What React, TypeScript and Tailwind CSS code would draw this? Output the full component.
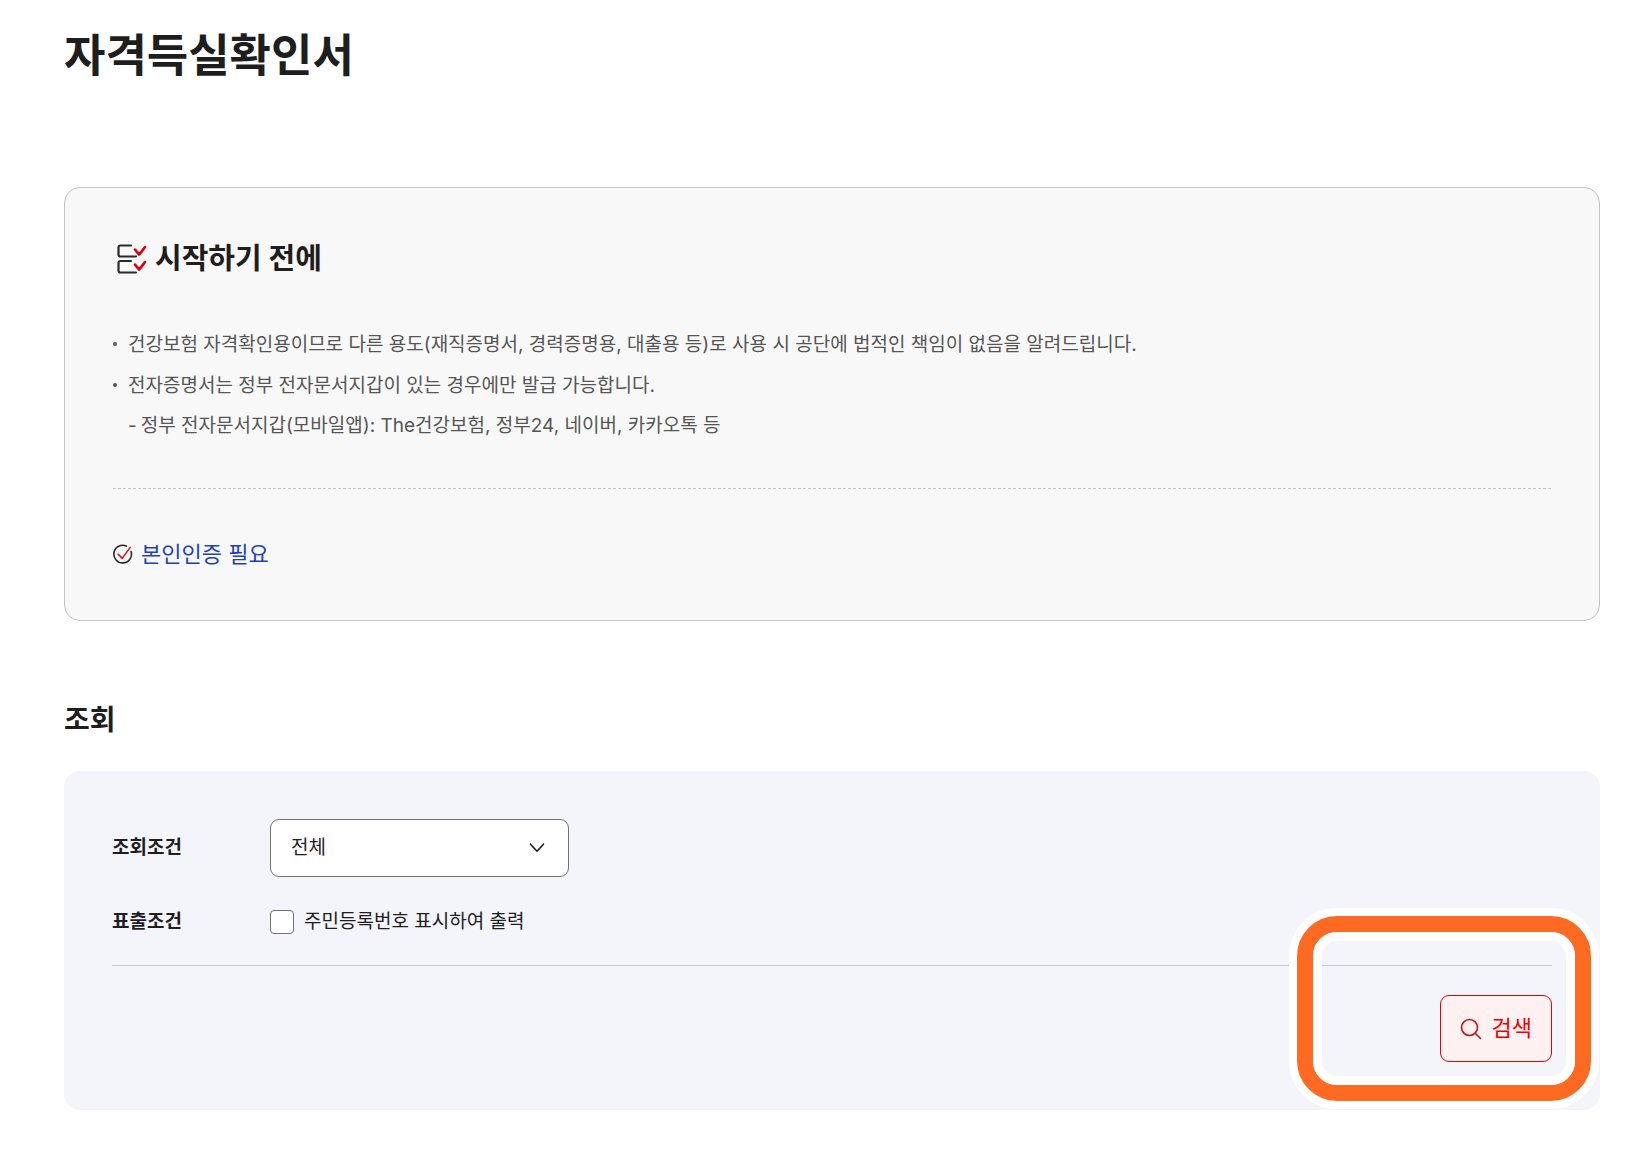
import { useState } from "react";

const NOTICES = [
  {
    text: "건강보험 자격확인용이므로 다른 용도(재직증명서, 경력증명용, 대출용 등)로 사용 시 공단에 법적인 책임이 없음을 알려드립니다.",
  },
  {
    text: "전자증명서는 정부 전자문서지갑이 있는 경우에만 발급 가능합니다.",
    sub: "정부 전자문서지갑(모바일앱): The건강보험, 정부24, 네이버, 카카오톡 등",
  },
];

export default function App() {
  const [condition, setCondition] = useState("all");
  const [showNumber, setShowNumber] = useState(false);

  return (
    <main className="bg-white pt-[26px] pr-[42px] pb-11 pl-16 font-['Inter','Noto_Sans_CJK_KR',sans-serif] text-[#1e1e1e]">
      <h1 className="text-[45px] leading-[60px] font-bold">자격득실확인서</h1>

      {/* 안내 카드 */}
      <section className="mt-[101px] rounded-2xl border border-[#c4c4c4] bg-[#f8f8f8] px-12 pt-12 pb-[50px]">
        <h2 className="flex items-center gap-1 text-[29px] leading-[46px] font-bold">
          <ChecklistIcon />
          시작하기 전에
        </h2>

        <ul className="mt-[42px] text-[19px] leading-[41px] text-[#555]">
          {NOTICES.map((n) => (
            <li key={n.text} className="flex gap-[11px]">
              <span className="mt-[18px] h-1 w-1 shrink-0 rounded-full bg-[#555]" />
              <div>
                <p>{n.text}</p>
                {n.sub && (
                  <p className="flex gap-1 leading-10">
                    <span>-</span>
                    {n.sub}
                  </p>
                )}
              </div>
            </li>
          ))}
        </ul>

        <div className="mt-[42px] border-t border-dashed border-[#c4c4c4]" />

        <p className="mt-[49px] flex items-center gap-2 text-[22px] leading-8 text-[#1d42b8]">
          <CheckCircleIcon />
          본인인증 필요
        </p>
      </section>

      <h2 className="mt-[81px] text-[28px] leading-9 font-bold">조회</h2>

      {/* 조회 조건 */}
      <form
        className="relative mt-[33px] rounded-2xl bg-[#f3f5fa] p-12"
        onSubmit={(e) => e.preventDefault()}
      >
        <div className="flex items-center">
          <label htmlFor="condition" className="w-[158px] text-[19px] font-bold">
            조회조건
          </label>
          <div className="grid w-[299px] items-center">
            <select
              id="condition"
              value={condition}
              onChange={(e) => setCondition(e.target.value)}
              className="col-start-1 row-start-1 h-[58px] appearance-none rounded-[9px] border border-[#717171] bg-white px-5 text-[19px]"
            >
              <option value="all">전체</option>
              <option value="work">직장가입자</option>
              <option value="local">지역가입자</option>
            </select>
            <svg
              className="pointer-events-none col-start-1 row-start-1 mr-6 justify-self-end"
              width="16"
              height="10"
              viewBox="0 0 16 10"
              fill="none"
            >
              <path d="M1.5 1.2L8 8.2l6.5-7" stroke="#1e1e1e" strokeWidth="1.6" strokeLinecap="round" strokeLinejoin="round" />
            </svg>
          </div>
        </div>

        <div className="mt-[29px] flex items-center border-b border-[#c4c6cb] pb-[27px]">
          <span className="w-[158px] text-[19px] leading-8 font-bold">표출조건</span>
          <label className="flex items-center gap-[10px] text-[19px] leading-8">
            <input
              type="checkbox"
              checked={showNumber}
              onChange={(e) => setShowNumber(e.target.checked)}
              className="h-6 w-6 appearance-none rounded border border-[#717171] bg-white checked:bg-[#d7000f]"
            />
            주민등록번호 표시하여 출력
          </label>
        </div>

        <div className="mt-[29px] flex justify-end">
          <button
            type="submit"
            className="flex h-[67px] items-center gap-[10px] rounded-[9px] border border-[#e60000] bg-[#fdf1f1] px-[19px] text-[22px] text-[#f00000]"
          >
            <SearchIcon />
            검색
          </button>
        </div>

        {/* 강조 테두리 */}
        <div className="pointer-events-none absolute right-px bottom-px h-[201px] w-[310px] rounded-[48px] border-8 border-white">
          <div className="h-full rounded-[40px] border-16 border-[#ff6a22]">
            <div className="h-full rounded-3xl border-9 border-white" />
          </div>
        </div>
      </form>
    </main>
  );
}

function ChecklistIcon() {
  return (
    <svg width="38" height="38" viewBox="0 0 38 38" fill="none" strokeWidth="2.2" strokeLinecap="round" strokeLinejoin="round">
      <path d="M18 5.5H7.5a2 2 0 0 0-2 2v7a2 2 0 0 0 2 2H23" stroke="#2b2b2b" />
      <path d="M18 21H7.5a2 2 0 0 0-2 2v7.5a2 2 0 0 0 2 2H23" stroke="#2b2b2b" />
      <path d="M22 9.6l4.2 5L32 7M22 24.6l4.2 5L32 22" stroke="#d7000f" strokeWidth="2.6" />
    </svg>
  );
}

function CheckCircleIcon() {
  return (
    <svg width="20" height="20" viewBox="0 0 20 20" fill="none" strokeWidth="1.6" strokeLinecap="round" strokeLinejoin="round">
      <path d="M13.3 2.1A8.8 8.8 0 1 0 18.1 7.6" stroke="#2b2b2b" />
      <path d="M5.2 10.2l4 4.2L17.2 3.4" stroke="#e01020" />
    </svg>
  );
}

function SearchIcon() {
  return (
    <svg width="22" height="22" viewBox="0 0 22 22" fill="none" stroke="#c9101c" strokeWidth="1.6" strokeLinecap="round">
      <circle cx="9.5" cy="9.5" r="8" />
      <path d="M15.2 15.2l5.3 5.3" />
    </svg>
  );
}
